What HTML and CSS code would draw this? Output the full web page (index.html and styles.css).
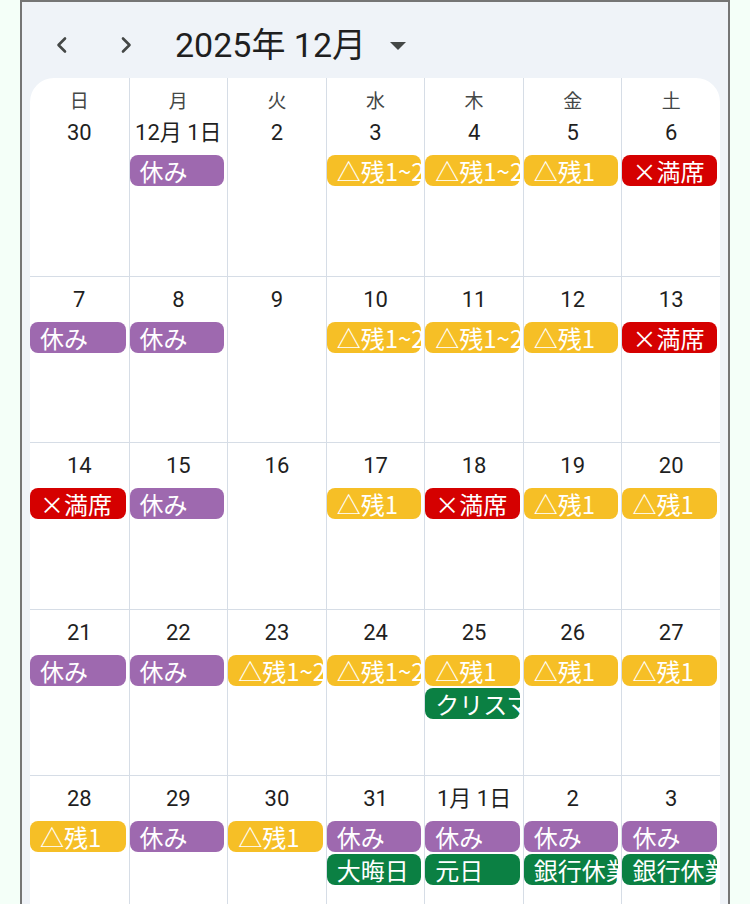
FILE: index.html
```html
<!DOCTYPE html>
<html lang="ja">
<head>
<meta charset="utf-8">
<title>カレンダー</title>
<link rel="stylesheet" href="styles.css">
</head>
<body>
<div class="frame">
  <header class="toolbar">
    <button class="nav-btn prev" aria-label="前月">
      <svg width="20" height="20" viewBox="0 0 20 20"><polyline points="13,3.5 6.5,10 13,16.5" /></svg>
    </button>
    <button class="nav-btn next" aria-label="翌月">
      <svg width="20" height="20" viewBox="0 0 20 20"><polyline points="7,3.5 13.5,10 7,16.5" /></svg>
    </button>
    <h1 class="title">2025年 12月</h1>
    <svg class="drop" width="16" height="8" viewBox="0 0 16 8"><path d="M0 0 L16 0 L8 8 Z" /></svg>
  </header>
  <main class="card">
    <div class="wd">日</div><div class="wd">月</div><div class="wd">火</div><div class="wd">水</div><div class="wd">木</div><div class="wd">金</div><div class="wd">土</div>

    <div class="day"><div class="num">30</div></div>
    <div class="day"><div class="num">12月 1日</div><div class="chip off">休み</div></div>
    <div class="day"><div class="num">2</div></div>
    <div class="day"><div class="num">3</div><div class="chip few">△残1~2</div></div>
    <div class="day"><div class="num">4</div><div class="chip few">△残1~2</div></div>
    <div class="day"><div class="num">5</div><div class="chip few">△残1</div></div>
    <div class="day"><div class="num">6</div><div class="chip full">×満席</div></div>

    <div class="day"><div class="num">7</div><div class="chip off">休み</div></div>
    <div class="day"><div class="num">8</div><div class="chip off">休み</div></div>
    <div class="day"><div class="num">9</div></div>
    <div class="day"><div class="num">10</div><div class="chip few">△残1~2</div></div>
    <div class="day"><div class="num">11</div><div class="chip few">△残1~2</div></div>
    <div class="day"><div class="num">12</div><div class="chip few">△残1</div></div>
    <div class="day"><div class="num">13</div><div class="chip full">×満席</div></div>

    <div class="day"><div class="num">14</div><div class="chip full">×満席</div></div>
    <div class="day"><div class="num">15</div><div class="chip off">休み</div></div>
    <div class="day"><div class="num">16</div></div>
    <div class="day"><div class="num">17</div><div class="chip few">△残1</div></div>
    <div class="day"><div class="num">18</div><div class="chip full">×満席</div></div>
    <div class="day"><div class="num">19</div><div class="chip few">△残1</div></div>
    <div class="day"><div class="num">20</div><div class="chip few">△残1</div></div>

    <div class="day"><div class="num">21</div><div class="chip off">休み</div></div>
    <div class="day"><div class="num">22</div><div class="chip off">休み</div></div>
    <div class="day"><div class="num">23</div><div class="chip few">△残1~2</div></div>
    <div class="day"><div class="num">24</div><div class="chip few">△残1~2</div></div>
    <div class="day"><div class="num">25</div><div class="chip few">△残1</div><div class="chip hol">クリスマス</div></div>
    <div class="day"><div class="num">26</div><div class="chip few">△残1</div></div>
    <div class="day"><div class="num">27</div><div class="chip few">△残1</div></div>

    <div class="day"><div class="num">28</div><div class="chip few">△残1</div></div>
    <div class="day"><div class="num">29</div><div class="chip off">休み</div></div>
    <div class="day"><div class="num">30</div><div class="chip few">△残1</div></div>
    <div class="day"><div class="num">31</div><div class="chip off">休み</div><div class="chip hol">大晦日</div></div>
    <div class="day"><div class="num">1月 1日</div><div class="chip off">休み</div><div class="chip hol">元日</div></div>
    <div class="day"><div class="num">2</div><div class="chip off">休み</div><div class="chip hol">銀行休業日</div></div>
    <div class="day"><div class="num">3</div><div class="chip off">休み</div><div class="chip hol">銀行休業日</div></div>
  </main>
</div>
</body>
</html>
```
FILE: styles.css
```css
html, body {
  margin: 0;
  padding: 0;
}
body {
  background: #f4fff8;
  font-family: Roboto, "Noto Sans CJK JP", sans-serif;
  color: #1f1f1f;
}
.frame {
  margin-left: 20px;
  width: 710px;
  min-height: 1000px;
  border: 2px solid #757575;
  border-bottom: none;
  background: #eff3f8;
  padding: 0 8px;
  box-sizing: border-box;
}
.toolbar {
  height: 76px;
  box-sizing: border-box;
  padding-top: 10px;
  display: flex;
  align-items: center;
}
.nav-btn {
  width: 40px;
  height: 40px;
  border: none;
  background: transparent;
  padding: 0;
  display: flex;
  align-items: center;
  justify-content: center;
}
.nav-btn svg polyline {
  fill: none;
  stroke: #444746;
  stroke-width: 2.6;
  stroke-linecap: round;
  stroke-linejoin: round;
}
.prev { margin-left: 11.5px; }
.next { margin-left: 24.5px; }
.title {
  margin: 0 0 0 29px;
  font-size: 34px;
  font-weight: 400;
  color: #1f1f1f;
  line-height: 40px;
  white-space: nowrap;
}
.drop {
  margin-left: 24px;
  margin-top: 2px;
  fill: #444746;
}
.card {
  background: #ffffff;
  border-radius: 24px 24px 0 0;
  display: grid;
  grid-template-columns: repeat(7, 1fr);
  grid-template-rows: 32px repeat(5, 166.5px);
}
.wd, .day {
  border-left: 1px solid #d6dde6;
  min-width: 0;
}
.wd:nth-child(7n+1), .day:nth-child(7n+1) {
  border-left: none;
}
.wd {
  text-align: center;
  font-family: "Noto Sans CJK JP", sans-serif;
  font-size: 19px;
  line-height: 24px;
  padding-top: 10px;
  color: #444746;
  box-sizing: border-box;
  overflow: visible;
}
.day {
  border-bottom: 1px solid #d6dde6;
  padding-top: 11px;
  box-sizing: border-box;
  overflow: hidden;
}
.num {
  text-align: center;
  font-size: 22px;
  line-height: 24px;
  color: #1f1f1f;
  height: 24px;
  margin-bottom: 10px;
  white-space: nowrap;
}
.chip {
  height: 31px;
  line-height: 31px;
  margin: 0 3px 2px 0;
  border-radius: 8px;
  padding-left: 10px;
  color: #ffffff;
  font-family: "Noto Sans CJK JP", sans-serif;
  font-size: 24px;
  white-space: nowrap;
  overflow-x: clip;
  overflow-y: visible;
}
.off { background: #9e69af; }
.few { background: #f6bf26; }
.full { background: #d50000; }
.hol { background: #0b8043; }
```
